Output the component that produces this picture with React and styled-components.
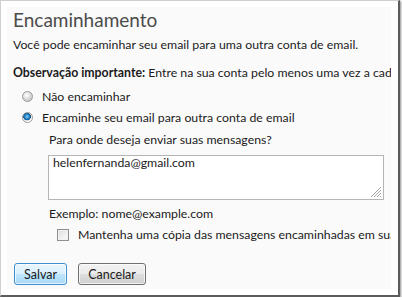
import React from 'react';
import styled, { createGlobalStyle } from 'styled-components';

const GlobalStyle = createGlobalStyle`
  html, body {
    margin: 0;
    padding: 0;
    background: #ffffff;
  }
  body {
    font-family: Lato, "Open Sans", "Liberation Sans", sans-serif;
  }
`;

// --- frame around the captured window ---

const Frame = styled.div`
  box-sizing: border-box;
  width: 400px;
  height: 297px;
  padding: 6px 7px 6px 6px;
  background: #ffffff;
  border-top: 1px solid #cfcfcf;
  border-left: 1px solid #cfcfcf;
  border-right: 2px solid #5c5c5c;
  border-bottom: 2px solid #5c5c5c;
  box-shadow: 1px 1px 2px rgba(0, 0, 0, 0.45);
`;

const Panel = styled.div`
  height: 100%;
  padding: 0 0 0 6px;
  background: #fafafa;
  overflow: hidden;
  color: #1b1b1b;
  font-size: 12.3px;
  line-height: 18px;
`;

const Title = styled.h1`
  margin: 0;
  font-size: 19px;
  line-height: 26px;
  font-weight: 400;
  color: #4b4b4b;
`;

const Line = styled.div`
  margin-top: ${p => p.$top || 0}px;
  white-space: nowrap;
`;

const Strong = styled.b`
  font-weight: 700;
`;

// --- radio options ---

const RadioGroup = styled.div`
  margin-top: 4px;
`;

const RadioRow = styled.label`
  display: flex;
  align-items: center;
  gap: 9px;
  height: 21px;
  padding-left: 9px;
  white-space: nowrap;
`;

const RadioDot = styled.span`
  box-sizing: border-box;
  width: 11px;
  height: 11px;
  border-radius: 50%;
  border: 1px solid #9a9a9a;
  background: ${p =>
    p.$checked
      ? 'radial-gradient(circle at 45% 40%, #7fd0f5 0, #1f7fc0 2.5px, #0d4f86 3.6px, #e8e8e8 4px, #ffffff 5px)'
      : 'radial-gradient(circle at 40% 35%, #ffffff 0, #e4e4e4 3px, #cfcfcf 5px)'};
`;

// --- forwarding address block ---

const SubBlock = styled.div`
  padding-left: 36px;
`;

const AddressBox = styled.div`
  position: relative;
  box-sizing: border-box;
  width: 336px;
  height: 45px;
  margin: 6px 0 0 -1px;
  padding: 0 4px;
  line-height: 14px;
  background: #ffffff;
  border: 1px solid #b5b5b5;
  white-space: nowrap;
`;

const Grip = styled.svg`
  position: absolute;
  right: 1px;
  bottom: 1px;
`;

const CheckRow = styled.label`
  display: flex;
  align-items: center;
  gap: 9px;
  height: 18px;
  margin-top: 3px;
  padding-left: 8px;
  white-space: nowrap;
`;

const CheckBox = styled.span`
  flex: none;
  box-sizing: border-box;
  width: 12px;
  height: 12px;
  border: 1px solid #8e8f8f;
  background: linear-gradient(135deg, #dcdcdc 0%, #f4f4f4 70%, #ffffff 100%);
  box-shadow: inset 0 0 0 1px #f0f0f0;
`;

// --- buttons ---

const Actions = styled.div`
  display: flex;
  gap: 11px;
  margin-top: 19px;
  padding-left: 1px;
`;

const Button = styled.button`
  box-sizing: border-box;
  height: 22px;
  width: ${p => p.$width}px;
  padding: 0;
  font-family: inherit;
  font-size: 12.5px;
  color: #1b1b1b;
  border-radius: 3px;
  border: 1px solid ${p => (p.$primary ? '#3d8fcf' : '#707070')};
  background: ${p =>
    p.$primary
      ? 'linear-gradient(#eaf6fd 0%, #d9f0fc 48%, #bee6fd 52%, #a7d9f5 100%)'
      : 'linear-gradient(#f2f2f2 0%, #ebebeb 48%, #dddddd 52%, #cfcfcf 100%)'};
  box-shadow: inset 0 0 0 1px rgba(255, 255, 255, 0.7);
`;

const App = () => (
  <>
    <GlobalStyle />
    <Frame>
      <Panel>
        <Title>Encaminhamento</Title>
        <Line $top={3}>Você pode encaminhar seu email para uma outra conta de email.</Line>
        <Line $top={10}>
          <Strong>Observação importante:</Strong> Entre na sua conta pelo menos uma vez a cada 270 dias para evitar que ela seja desativada.
        </Line>
        <RadioGroup>
          <RadioRow>
            <RadioDot />
            Não encaminhar
          </RadioRow>
          <RadioRow>
            <RadioDot $checked />
            Encaminhe seu email para outra conta de email
          </RadioRow>
        </RadioGroup>
        <SubBlock>
          <Line $top={3}>Para onde deseja enviar suas mensagens?</Line>
          <AddressBox>
            helenfernanda@gmail.com
            <Grip width="12" height="12" viewBox="0 0 12 12">
              <g stroke="#a8a8a8" strokeWidth="1">
                <line x1="11" y1="1" x2="1" y2="11" />
                <line x1="11" y1="4" x2="4" y2="11" />
                <line x1="11" y1="7" x2="7" y2="11" />
                <line x1="11" y1="10" x2="10" y2="11" />
              </g>
            </Grip>
          </AddressBox>
          <Line $top={5}>Exemplo: nome@example.com</Line>
          <CheckRow>
            <CheckBox />
            Mantenha uma cópia das mensagens encaminhadas em sua conta
          </CheckRow>
        </SubBlock>
        <Actions>
          <Button $primary $width={53}>Salvar</Button>
          <Button $width={68}>Cancelar</Button>
        </Actions>
      </Panel>
    </Frame>
  </>
);

export default App;
